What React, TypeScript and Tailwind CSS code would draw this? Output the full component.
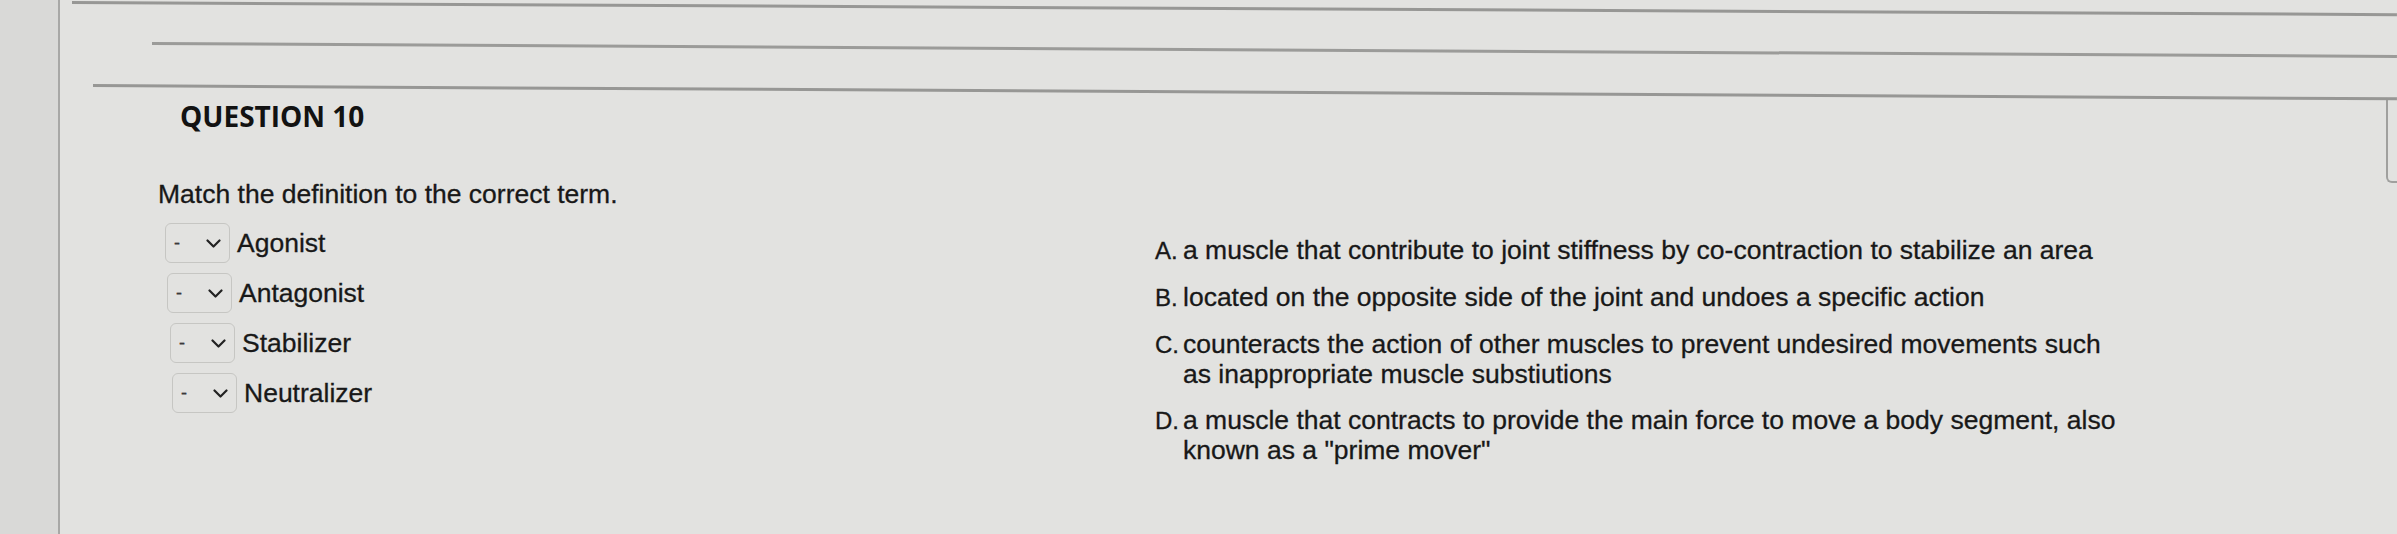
import React from "react";

const arial = { fontFamily: '"Liberation Sans", Arial, sans-serif' };

function Chevron() {
  return (
    <svg width="15" height="9" viewBox="0 0 15 9" className="shrink-0">
      <polyline points="1.5,1.5 7.5,7.5 13.5,1.5" fill="none" stroke="#222" strokeWidth="2.2" strokeLinecap="round" strokeLinejoin="round" />
    </svg>
  );
}

function Select() {
  return (
    <div className="w-[65px] h-[40px] shrink-0 border-[1.5px] border-[#c6c6c3] rounded-[6px] flex items-center justify-between pl-[8px] pr-[8px] text-[18px] text-[#3a3a3a]">
      <span>-</span>
      <Chevron />
    </div>
  );
}

const terms = [
  { t: "Agonist", ml: "ml-0" },
  { t: "Antagonist", ml: "ml-[2px]" },
  { t: "Stabilizer", ml: "ml-[5px]" },
  { t: "Neutralizer", ml: "ml-[7px]" },
];

const defs: { k: string; lines: string[] }[] = [
  { k: "A.", lines: ["a muscle that contribute to joint stiffness by co-contraction to stabilize an area"] },
  { k: "B.", lines: ["located on the opposite side of the joint and undoes a specific action"] },
  {
    k: "C.",
    lines: [
      "counteracts the action of other muscles to prevent undesired movements such",
      "as inappropriate muscle substiutions",
    ],
  },
  {
    k: "D.",
    lines: [
      "a muscle that contracts to provide the main force to move a body segment, also",
      'known as a "prime mover"',
    ],
  },
];

export default function App() {
  return (
    <div className="w-[2397px] h-[534px] overflow-hidden flex bg-[#e2e2e0] text-[#181818]" style={arial}>
      <div className="w-[60px] shrink-0 bg-[#d9d9d7] border-r-2 border-[#a8a8a6]" />
      <div className="flex-1 flex flex-col min-w-0">
        <div className="flex flex-col">
          <div className="mt-[1px] ml-[12px] h-[3px] bg-[#979795] origin-left rotate-[0.3deg]" />
          <div className="mt-[38px] ml-[92px] h-[3px] bg-[#9b9b99] origin-left rotate-[0.33deg]" />
          <div className="mt-[39px] ml-[33px] h-[3px] bg-[#979795] origin-left rotate-[0.33deg]" />
          <div className="h-[11px]" />
        </div>
        <div className="flex flex-1">
          <div className="flex-1 pl-[98px] flex flex-col [-webkit-text-stroke:0.3px_#181818]">
            <div
              className="mt-[1px] ml-[22px] text-[28px] leading-[34px] font-bold text-[#121212] [-webkit-text-stroke:0px]"
              style={{ fontFamily: '"Open Sans", sans-serif' }}
            >
              QUESTION 10
            </div>
            <div className="mt-[46px] text-[26.5px] leading-[30px]">Match the definition to the correct term.</div>
            <div className="mt-[14px] flex">
              <div className="w-[997px] shrink-0 pl-[7px] flex flex-col gap-[10px]">
                {terms.map((r) => (
                  <div key={r.t} className={`flex items-center gap-[7px] ${r.ml}`}>
                    <Select />
                    <span className="text-[26.5px] leading-[30px]">{r.t}</span>
                  </div>
                ))}
              </div>
              <div className="pt-[12px] flex flex-col gap-4">
                {defs.map((d) => (
                  <div key={d.k} className="flex items-baseline text-[26.5px] leading-[30px] whitespace-nowrap">
                    <span className="w-[28px] shrink-0 text-[24px]">{d.k}</span>
                    <div className="flex flex-col">
                      {d.lines.map((l) => (
                        <span key={l}>{l}</span>
                      ))}
                    </div>
                  </div>
                ))}
              </div>
            </div>
          </div>
          <div className="w-[11px] h-[85px] shrink-0 border-l-2 border-b-2 border-[#a0a09e] rounded-bl-[6px]" />
        </div>
      </div>
    </div>
  );
}
